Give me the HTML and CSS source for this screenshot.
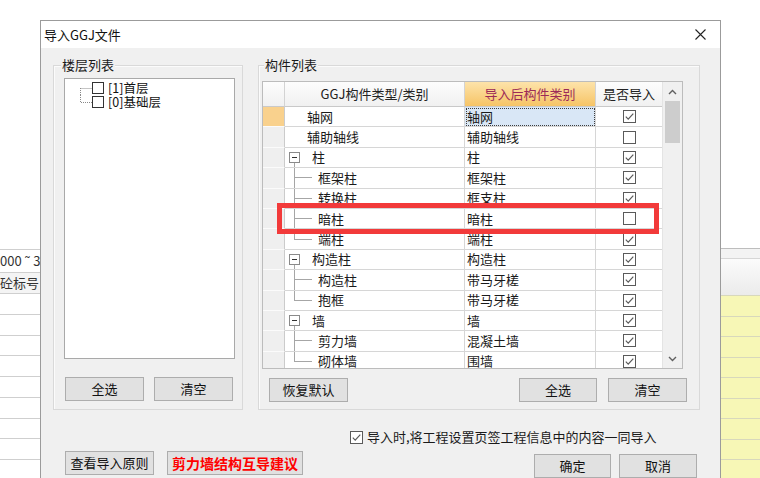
FILE: index.html
```html
<!DOCTYPE html>
<html lang="zh-CN">
<head>
<meta charset="utf-8">
<title>导入GGJ文件</title>
<link rel="stylesheet" href="styles.css">
</head>
<body>
<svg class="defs" width="0" height="0" aria-hidden="true">
  <symbol id="chk-on" viewBox="0 0 13 13"><rect x="0.5" y="0.5" width="12" height="12" fill="#fff" stroke="#5a5a5a"/><path d="M2.8 6.6 L5.2 9.1 L10.3 3.6" fill="none" stroke="#5a5a5a" stroke-width="1.2"/></symbol>
  <symbol id="chk-off" viewBox="0 0 13 13"><rect x="0.5" y="0.5" width="12" height="12" fill="#fff" stroke="#5a5a5a"/></symbol>
</svg>
<div class="page">
  <div class="bg-left">
    <div class="bg-row first">000 ˜ 3</div>
    <div class="bg-row head">砼标号</div>
    <div class="bg-row"></div><div class="bg-row"></div><div class="bg-row"></div>
    <div class="bg-row"></div><div class="bg-row"></div><div class="bg-row"></div>
    <div class="bg-row"></div><div class="bg-row"></div><div class="bg-row"></div>
  </div>

  <div class="dialog">
    <div class="titlebar">
      <span class="title">导入GGJ文件</span>
      <svg class="close" width="11" height="11" viewBox="0 0 11 11"><path d="M0.5 0.5 L10.5 10.5 M10.5 0.5 L0.5 10.5" stroke="#222" stroke-width="1.1"/></svg>
    </div>
    <div class="body">
      <div class="groups">
        <div class="group floor">
          <div class="legend">楼层列表</div>
          <div class="tree">
            <div class="titem">
              <svg class="conn" width="12" height="14" viewBox="0 0 12 14"><path d="M0.5 7 V14 M0.5 7.5 H12" stroke="#8a8a8a" stroke-dasharray="1 1" fill="none"/></svg>
              <span class="tbox"></span><span class="tlabel">[1]首层</span>
            </div>
            <div class="titem">
              <svg class="conn" width="12" height="14" viewBox="0 0 12 14"><path d="M0.5 0 V7.5 H12" stroke="#8a8a8a" stroke-dasharray="1 1" fill="none"/></svg>
              <span class="tbox"></span><span class="tlabel">[0]基础层</span>
            </div>
          </div>
          <div class="btns floor-btns">
            <button class="btn w79">全选</button>
            <button class="btn w79">清空</button>
          </div>
        </div>

        <div class="group comp">
          <div class="legend">构件列表</div>
          <div class="grid-wrap">
            <div class="grid">
              <div class="table">
                <div class="row hdr">
                  <div class="hc"></div>
                  <div class="hc hc1">GGJ构件类型/类别</div>
                  <div class="hc hc2">导入后构件类别</div>
                  <div class="hc hc3">是否导入</div>
                </div>
                <div class="row">
                  <div class="rh cur"></div>
                  <div class="c1"><span class="leaf">轴网</span></div>
                  <div class="c2 sel">轴网</div>
                  <div class="c3"><svg class="cb"><use href="#chk-on"/></svg></div>
                </div>
                <div class="row">
                  <div class="rh"></div>
                  <div class="c1"><span class="leaf">辅助轴线</span></div>
                  <div class="c2">辅助轴线</div>
                  <div class="c3"><svg class="cb"><use href="#chk-off"/></svg></div>
                </div>
                <div class="row">
                  <div class="rh"></div>
                  <div class="c1"><span class="grp"><span class="box"></span></span>柱</div>
                  <div class="c2">柱</div>
                  <div class="c3"><svg class="cb"><use href="#chk-on"/></svg></div>
                </div>
                <div class="row">
                  <div class="rh"></div>
                  <div class="c1"><span class="br mid"></span>框架柱</div>
                  <div class="c2">框架柱</div>
                  <div class="c3"><svg class="cb"><use href="#chk-on"/></svg></div>
                </div>
                <div class="row">
                  <div class="rh"></div>
                  <div class="c1"><span class="br mid"></span>转换柱</div>
                  <div class="c2">框支柱</div>
                  <div class="c3"><svg class="cb"><use href="#chk-on"/></svg></div>
                </div>
                <div class="row">
                  <div class="rh"></div>
                  <div class="c1"><span class="br mid"></span>暗柱</div>
                  <div class="c2">暗柱</div>
                  <div class="c3"><svg class="cb"><use href="#chk-off"/></svg></div>
                </div>
                <div class="row">
                  <div class="rh"></div>
                  <div class="c1"><span class="br last"></span>端柱</div>
                  <div class="c2">端柱</div>
                  <div class="c3"><svg class="cb"><use href="#chk-on"/></svg></div>
                </div>
                <div class="row">
                  <div class="rh"></div>
                  <div class="c1"><span class="grp"><span class="box"></span></span>构造柱</div>
                  <div class="c2">构造柱</div>
                  <div class="c3"><svg class="cb"><use href="#chk-on"/></svg></div>
                </div>
                <div class="row">
                  <div class="rh"></div>
                  <div class="c1"><span class="br mid"></span>构造柱</div>
                  <div class="c2">带马牙槎</div>
                  <div class="c3"><svg class="cb"><use href="#chk-on"/></svg></div>
                </div>
                <div class="row">
                  <div class="rh"></div>
                  <div class="c1"><span class="br last"></span>抱框</div>
                  <div class="c2">带马牙槎</div>
                  <div class="c3"><svg class="cb"><use href="#chk-on"/></svg></div>
                </div>
                <div class="row">
                  <div class="rh"></div>
                  <div class="c1"><span class="grp"><span class="box"></span></span>墙</div>
                  <div class="c2">墙</div>
                  <div class="c3"><svg class="cb"><use href="#chk-on"/></svg></div>
                </div>
                <div class="row">
                  <div class="rh"></div>
                  <div class="c1"><span class="br mid"></span>剪力墙</div>
                  <div class="c2">混凝土墙</div>
                  <div class="c3"><svg class="cb"><use href="#chk-on"/></svg></div>
                </div>
                <div class="row">
                  <div class="rh"></div>
                  <div class="c1"><span class="br last"></span>砌体墙</div>
                  <div class="c2">围墙</div>
                  <div class="c3"><svg class="cb"><use href="#chk-on"/></svg></div>
                </div>
              </div>
              <div class="scrollbar">
                <div class="sb-arrow up"><svg width="9" height="6" viewBox="0 0 9 6"><path d="M1 5 L4.5 1.5 L8 5" fill="none" stroke="#606060" stroke-width="1.4"/></svg></div>
                <div class="sb-thumb"></div>
                <div class="sb-track"></div>
                <div class="sb-arrow down"><svg width="9" height="6" viewBox="0 0 9 6"><path d="M1 1 L4.5 4.5 L8 1" fill="none" stroke="#606060" stroke-width="1.4"/></svg></div>
              </div>
            </div>
            <div class="highlight"></div>
          </div>
          <div class="btns comp-btns">
            <button class="btn w79">恢复默认</button>
            <button class="btn w78 push">全选</button>
            <button class="btn w79">清空</button>
          </div>
        </div>
      </div>

      <div class="opt">
        <svg class="optcb" width="13" height="13"><use href="#chk-on"/></svg>
        <span>导入时,将工程设置页签工程信息中的内容一同导入</span>
      </div>

      <div class="footer">
        <button class="btn w89">查看导入原则</button>
        <button class="btn w136 red">剪力墙结构互导建议</button>
        <div class="footer-right">
          <button class="btn w77">确定</button>
          <button class="btn w78">取消</button>
        </div>
      </div>
    </div>
  </div>

  <div class="bg-right">
    <div class="rb-line"></div>
    <div class="rb-band"></div>
    <div class="rb-head"></div>
    <div class="rb-row"></div><div class="rb-row"></div><div class="rb-row"></div>
    <div class="rb-row"></div><div class="rb-row"></div><div class="rb-row"></div>
    <div class="rb-row"></div><div class="rb-row"></div><div class="rb-row"></div>
  </div>
</div>
</body>
</html>
```

FILE: styles.css
```css
* { box-sizing: border-box; margin: 0; padding: 0; }
html, body { width: 760px; height: 478px; overflow: hidden; background: #fff; }
body {
  font-family: "Noto Sans CJK SC", "Noto Sans", sans-serif;
  font-size: 13px;
  color: #1a1a1a;
}
.defs { position: absolute; width: 0; height: 0; }

.page { display: flex; width: 760px; height: 478px; }

/* background window, left */
.bg-left {
  width: 40px; flex: none; padding-top: 249px;
  overflow: hidden; white-space: nowrap; color: #333; font-size: 13px;
}
.bg-row { height: 20.75px; border-top: 1px solid #cfcfcf; }
.bg-row.first { height: 23px; line-height: 21px; }
.bg-row.head { height: 21px; line-height: 19px; background: #f4f4f4; }

/* background window, right */
.bg-right { width: 39px; flex: none; padding-top: 248px; overflow: hidden; }
.rb-line { height: 1px; background: #bdbdbd; }
.rb-band { height: 10px; background: #f3f3f3; border-bottom: 1px solid #d6d6d6; }
.rb-head { height: 36px; background: linear-gradient(#fbfbfb, #ebebeb); }
.rb-row { height: 20.5px; background: #f7f7b6; border-top: 1px solid #d8d8bc; }

/* dialog */
.dialog {
  width: 681px; flex: none; margin-top: 20px;
  border: 1px solid #9b9b9b; border-bottom: none;
  display: flex; flex-direction: column; background: #f0f0f0;
}
.titlebar {
  height: 27px; flex: none; background: #fff;
  display: flex; align-items: center; justify-content: space-between;
  padding: 0 14px 0 3px;
}
.title { font-size: 13px; color: #111; line-height: 18px; }
.close { display: block; }

.body { flex: 1; padding: 17px 0 0 12px; display: flex; flex-direction: column; }
.groups { display: flex; gap: 15px; height: 345px; }
.group {
  border: 1px solid #d9d9d9;
  display: flex; flex-direction: column;
  box-shadow: inset 1px 1px 0 #fbfbfb;
}
.group.floor { width: 190px; }
.group.comp { width: 442px; }
.legend {
  align-self: flex-start;
  margin: -10px 0 0 7px; padding: 0 1px;
  height: 17px; line-height: 17px;
  background: #f0f0f0; color: #1a1a1a;
}
.comp .legend { margin-left: 5px; }

/* floor tree */
.tree {
  margin: 5px 0 0 10px; width: 171px; height: 281px;
  background: #fff; border: 1px solid #a9a9a9;
  padding: 2px 0 0 15px;
}
.titem { display: flex; align-items: center; height: 14px; }
.conn { display: block; flex: none; }
.tbox { width: 12px; height: 12px; border: 1px solid #333; background: #fff; flex: none; }
.tlabel { margin-left: 4px; line-height: 14px; height: 14px; font-size: 12.5px; color: #111; white-space: nowrap; }

.btns { display: flex; }
.floor-btns { margin: 18px 0 0 11px; gap: 10px; }
.comp-btns { margin: 9px 0 0 10px; }
.comp-btns .push { margin-left: 171px; margin-right: 11px; }

.btn {
  height: 24px; border: 1px solid #adadad; background: #e1e1e1;
  font: inherit; font-size: 13px; color: #111;
  display: flex; align-items: center; justify-content: center;
  flex: none; line-height: 18px;
}
.w77 { width: 77px; } .w78 { width: 78px; } .w79 { width: 79px; }
.w89 { width: 89px; } .w136 { width: 136px; }
.btn.red { color: #f00; font-weight: bold; font-size: 14px; }

/* component grid */
.grid-wrap { position: relative; margin: 8px 0 0 3px; width: 421px; height: 288px; }
.grid { display: flex; width: 100%; height: 100%; border: 1px solid #bcbcbc; background: #fff; }
.table { width: 399px; flex: none; overflow: hidden; }
.row {
  display: grid; grid-template-columns: 22px 180px 131px 66px;
  height: 20.4px;
}
.row.hdr { height: 25px; }
.hc {
  background: linear-gradient(#fdfdfd, #f1f1f1);
  border-right: 1px solid #d3d3d3; border-bottom: 1px solid #c9c9c9;
  display: flex; align-items: center; justify-content: center;
  color: #222; line-height: 18px;
}
.hc1 { font-size: 13px; }
.hc2 {
  background: linear-gradient(#fde3aa, #f6c466);
  color: #9c2a57;
}
.hc3 { border-right: none; }

.rh { background: #efefef; border-right: 1px solid #cbcbcb; border-bottom: 1px solid #fbfbfb; }
.rh.cur { background: #f9d18d; }
.c1, .c2, .c3 {
  border-right: 1px solid #d6d6d6; border-bottom: 1px solid #d6d6d6;
  display: flex; align-items: center; line-height: 18px; white-space: nowrap;
  color: #1a1a1a;
}
.c2 { padding-left: 2px; }
.c2.sel { background: #d9e7f6; outline: 1px dotted #3c3c3c; outline-offset: -2px; }
.c3 { justify-content: center; border-right: none; }
.cb { width: 13px; height: 13px; display: block; }

.leaf { padding-left: 22px; }
.grp {
  width: 27px; align-self: stretch; flex: none;
  display: flex; align-items: center;
  background: linear-gradient(#a6a6a6, #a6a6a6) 9px 100% / 1px 50% no-repeat;
}
.box {
  margin-left: 4px; width: 11px; height: 11px;
  border: 1px solid #8a8a8a; background: #fff;
  display: flex; align-items: center; justify-content: center;
}
.box::before { content: ""; width: 5px; height: 1px; background: #333; }
.br { width: 33px; align-self: stretch; flex: none; }
.br.mid {
  background:
    linear-gradient(#a6a6a6, #a6a6a6) 9px 0 / 1px 100% no-repeat,
    linear-gradient(#a6a6a6, #a6a6a6) 9px 50% / 18px 1px no-repeat;
}
.br.last {
  background:
    linear-gradient(#a6a6a6, #a6a6a6) 9px 0 / 1px 50% no-repeat,
    linear-gradient(#a6a6a6, #a6a6a6) 9px 50% / 18px 1px no-repeat;
}

.scrollbar {
  width: 20px; flex: none; background: #f0f0f0;
  border-left: 1px solid #e4e4e4;
  display: flex; flex-direction: column; align-items: center;
}
.sb-arrow { height: 19px; width: 100%; display: flex; align-items: center; justify-content: center; flex: none; }
.sb-arrow.down { height: 18px; }
.sb-thumb { width: 15px; height: 42px; background: #cdcdcd; flex: none; }
.sb-track { flex: 1; }

.highlight {
  position: absolute; left: 15px; top: 122px;
  width: 382px; height: 31px;
  border: 5px solid #f23a3a;
}

/* option + footer */
.opt {
  margin: 18px 0 0 297px; height: 18px;
  display: flex; align-items: center;
}
.optcb { display: block; flex: none; }
.opt span { margin-left: 4px; line-height: 18px; color: #1a1a1a; white-space: nowrap; }

.footer { display: flex; align-items: flex-start; margin-top: 5px; padding-left: 12px; }
.footer .red { margin-left: 13px; }
.footer-right { display: flex; gap: 8px; margin: 3px 23px 0 auto; }
```
